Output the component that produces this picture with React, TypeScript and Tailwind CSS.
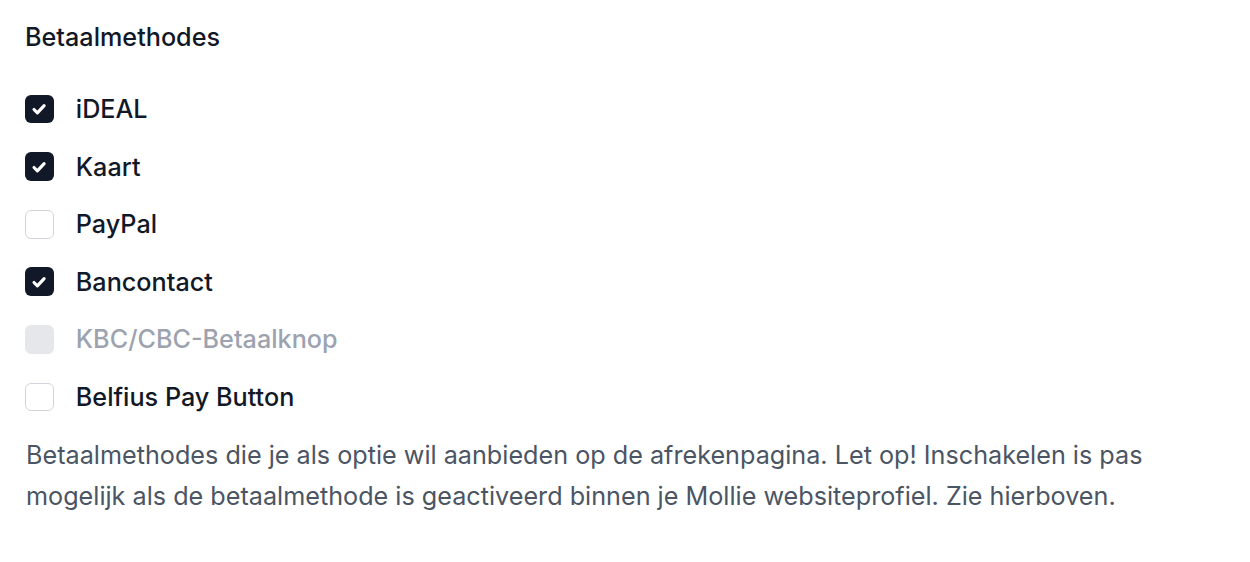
import React from "react";

type Item = { label: string; state: "checked" | "unchecked" | "disabled" };

const items: Item[] = [
  { label: "iDEAL", state: "checked" },
  { label: "Kaart", state: "checked" },
  { label: "PayPal", state: "unchecked" },
  { label: "Bancontact", state: "checked" },
  { label: "KBC/CBC-Betaalknop", state: "disabled" },
  { label: "Belfius Pay Button", state: "unchecked" },
];

function Box({ state }: { state: Item["state"] }) {
  if (state === "checked") {
    return (
      <div className="flex h-[28.8px] w-[28.8px] shrink-0 items-center justify-center rounded-[6px] bg-[#111827]">
        <svg width="20" height="20" viewBox="0 0 16 16" fill="none">
          <path d="M4 8.4l2.7 2.7 5.4-5.8" stroke="white" strokeWidth="2.5" strokeLinecap="round" strokeLinejoin="round" />
        </svg>
      </div>
    );
  }
  if (state === "disabled") {
    return <div className="h-[28.8px] w-[28.8px] shrink-0 rounded-[6px] border border-[#e5e7eb] bg-[#e5e7eb]" />;
  }
  return <div className="h-[28.8px] w-[28.8px] shrink-0 rounded-[6px] border border-[#d1d5db] bg-white" />;
}

export default function App() {
  return (
    <div className="min-h-[562px] bg-white pl-[25px] pt-[19px] text-[#111827]" style={{ fontFamily: "Inter, 'Noto Sans', sans-serif" }}>
      <h2 className="text-[25.2px] leading-[36px] font-medium">Betaalmethodes</h2>
      <div className="mt-[36px] flex flex-col gap-[21.6px]">
        {items.map((it) => (
          <label key={it.label} className="flex h-[36px] items-center gap-[22px]">
            <Box state={it.state} />
            <span className={`text-[25.2px] leading-[36px] font-medium ${it.state === "disabled" ? "text-[#9ca3af]" : "text-[#111827]"}`}>
              {it.label}
            </span>
          </label>
        ))}
      </div>
      <p className="mt-[20px] w-[1180px] pl-[1px] text-[25.2px] leading-[41px] text-[#4b5563]">
        Betaalmethodes die je als optie wil aanbieden op de afrekenpagina. Let op! Inschakelen is pas mogelijk als de betaalmethode is geactiveerd binnen je Mollie websiteprofiel. Zie hierboven.
      </p>
    </div>
  );
}
